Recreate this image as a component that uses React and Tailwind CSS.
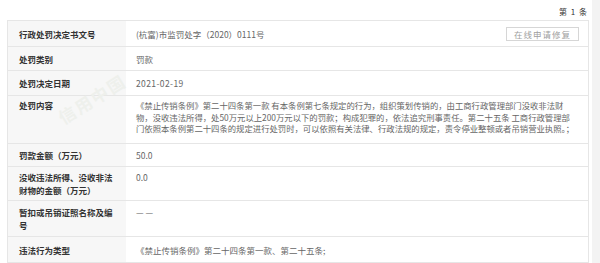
import React from 'react';

const rows = [
  { label: '行政处罚决定书文号', value: '(杭富)市监罚处字（2020）0111号', h: 'h-[26px]', pt: 'pt-[7px]', action: true },
  { label: '处罚类别', value: '罚款', h: 'h-[24px]', pt: 'pt-[6px]' },
  { label: '处罚决定日期', value: '2021-02-19', h: 'h-[25px]', pt: 'pt-[6px]', spaced: true },
  {
    label: '处罚内容',
    lines: [
      '《禁止传销条例》第二十四条第一款 有本条例第七条规定的行为，组织策划传销的，由工商行政管理部门没收非法财',
      '物，没收违法所得，处50万元以上200万元以下的罚款；构成犯罪的，依法追究刑事责任。第二十五条 工商行政管理部',
      '门依照本条例第二十四条的规定进行处罚时，可以依照有关法律、行政法规的规定，责令停业整顿或者吊销营业执照。；',
    ],
    h: 'h-[48px]',
    pt: 'pt-[3px]',
  },
  { label: '罚款金额（万元）', value: '50.0', h: 'h-[23px]', pt: 'pt-[5px]' },
  { label: '没收违法所得、没收非法财物的金额（万元）', value: '0.0', h: 'h-[34px]', pt: 'pt-[4px]' },
  { label: '暂扣或吊销证照名称及编号', value: '— —', h: 'h-[36px]', pt: 'pt-[5px]' },
  { label: '违法行为类型', value: '《禁止传销条例》第二十四条第一款、第二十五条;', h: 'h-[26px]', pt: 'pt-[7px]' },
];

const App = () => {
  return (
    <div className="flex w-[600px] h-[263px] overflow-hidden bg-white font-['Noto_Sans_CJK_SC',sans-serif]">
      <div className="relative w-[592px] pl-[7px] pr-[3px]">
        <div className="flex justify-end h-[20px] pt-[6px] pr-[1px] text-[8px] text-[#333] tracking-[1px]">
          第 1 条
        </div>
        <div className="border border-[#e6e6e6] border-b-0">
          {rows.map((r, i) => (
            <div key={i} className={`grid grid-cols-[118px_1fr] border-b border-[#e6e6e6] ${r.h}`}>
              <div className={`bg-[#f6f6f6]/90 pl-[11px] pr-[8px] ${r.pt} text-[8.5px] leading-[13px] font-bold text-[#333]`}>
                {r.label}
              </div>
              <div className={`flex items-start justify-between pl-[10px] pr-[8px] ${r.pt} text-[8.5px] leading-[11.5px] text-[#666]`}>
                {r.lines ? (
                  <div className="pt-[1px] whitespace-nowrap text-[8.35px]">
                    {r.lines.map((l, j) => (
                      <div key={j}>{l}</div>
                    ))}
                  </div>
                ) : (
                  <span className={`pt-[1px] ${r.spaced ? 'tracking-[0.4px]' : ''}`}>{r.value}</span>
                )}
                {r.action && (
                  <button className="shrink-0 -mt-[1px] mr-[1px] h-[14px] px-[7px] border border-[#d6d6d6] text-[8.5px] leading-[12px] text-[#a0a0a0] tracking-[1px] bg-white">
                    在线申请修复
                  </button>
                )}
              </div>
            </div>
          ))}
        </div>
        <div className="absolute left-[54px] top-[86px] pointer-events-none select-none -rotate-[32deg] text-[17px] font-bold text-[#eef0ec] tracking-[2px]">
          信用中国
        </div>
      </div>
      <div className="flex-1 bg-[#f3f3f3]" />
    </div>
  );
};

export default App;
